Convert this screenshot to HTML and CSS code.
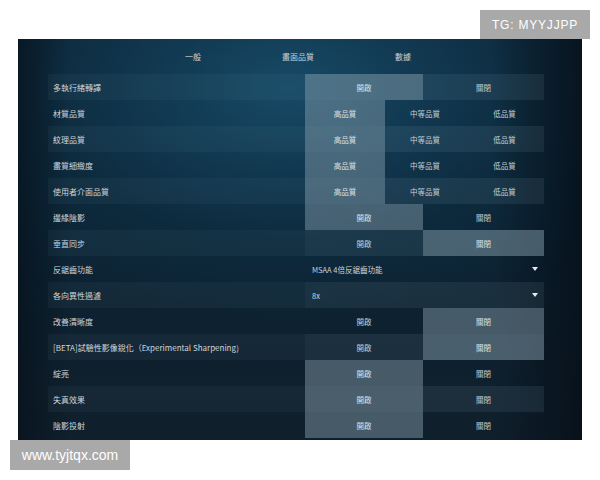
FILE: index.html
```html
<!DOCTYPE html>
<html lang="zh-Hant">
<head>
<meta charset="utf-8">
<title>畫面品質</title>
<link rel="stylesheet" href="styles.css">
</head>
<body>
<div class="wm wm-top">TG: MYYJJPP</div>
<div class="panel">
  <div class="tabs">
    <span class="tab">一般</span>
    <span class="tab">畫面品質</span>
    <span class="tab">數據</span>
  </div>
  <div class="rows">
    <div class="row alt"><div class="label">多執行緒轉譯</div><div class="opts two"><div class="opt on">開啟</div><div class="opt">關閉</div></div></div>
    <div class="row"><div class="label">材質品質</div><div class="opts three"><div class="opt on">高品質</div><div class="opt">中等品質</div><div class="opt">低品質</div></div></div>
    <div class="row alt"><div class="label">紋理品質</div><div class="opts three"><div class="opt on">高品質</div><div class="opt">中等品質</div><div class="opt">低品質</div></div></div>
    <div class="row"><div class="label">畫質細緻度</div><div class="opts three"><div class="opt on">高品質</div><div class="opt">中等品質</div><div class="opt">低品質</div></div></div>
    <div class="row alt"><div class="label">使用者介面品質</div><div class="opts three"><div class="opt on">高品質</div><div class="opt">中等品質</div><div class="opt">低品質</div></div></div>
    <div class="row"><div class="label">邊緣陰影</div><div class="opts two"><div class="opt on">開啟</div><div class="opt">關閉</div></div></div>
    <div class="row alt"><div class="label">垂直同步</div><div class="opts two"><div class="opt">開啟</div><div class="opt on">關閉</div></div></div>
    <div class="row"><div class="label">反鋸齒功能</div><div class="opts dd"><span>MSAA 4倍反鋸齒功能</span><span class="arrow"></span></div></div>
    <div class="row alt"><div class="label">各向異性過濾</div><div class="opts dd"><span>8x</span><span class="arrow"></span></div></div>
    <div class="row"><div class="label">改善清晰度</div><div class="opts two"><div class="opt">開啟</div><div class="opt on">關閉</div></div></div>
    <div class="row alt"><div class="label">[BETA]試驗性影像銳化（Experimental Sharpening)</div><div class="opts two"><div class="opt">開啟</div><div class="opt on">關閉</div></div></div>
    <div class="row"><div class="label">綻亮</div><div class="opts two"><div class="opt on">開啟</div><div class="opt">關閉</div></div></div>
    <div class="row alt"><div class="label">失真效果</div><div class="opts two"><div class="opt on">開啟</div><div class="opt">關閉</div></div></div>
    <div class="row"><div class="label">陰影投射</div><div class="opts two"><div class="opt on">開啟</div><div class="opt">關閉</div></div></div>
  </div>
</div>
<div class="wm wm-bottom">www.tyjtqx.com</div>
</body>
</html>
```

FILE: styles.css
```css
html, body {
  margin: 0;
  padding: 0;
  background: #ffffff;
}
body {
  width: 600px;
  height: 480px;
  position: relative;
  font-family: "Noto Sans CJK TC", "Noto Sans", sans-serif;
  overflow: hidden;
}
.panel {
  margin: 39px 0 0 18px;
  width: 564px;
  height: 401px;
  box-sizing: border-box;
  background:
    linear-gradient(90deg, rgba(4,12,20,0.55) 0%, rgba(4,12,20,0) 9%, rgba(4,12,20,0) 84%, rgba(4,10,18,0.65) 100%),
    linear-gradient(180deg, rgba(0,0,0,0) 55%, rgba(20,28,38,0.5) 100%),
    radial-gradient(ellipse 70% 60% at 48% 12%, #174a66 0%, #113850 35%, #0d2a3d 65%, #0c2232 100%);
  color: #d3dadf;
}
.tabs {
  height: 35px;
  display: flex;
  justify-content: center;
  align-items: center;
  padding-right: 4px;
}
.tab {
  width: 105px;
  text-align: center;
  font-size: 8px;
  color: #c9d1d6;
  line-height: 1;
}
.rows {
  margin-left: 30px;
  width: 496px;
}
.row {
  display: flex;
  height: 26px;
}
.row.alt {
  background: rgba(120, 150, 170, 0.07);
}
.label {
  width: 257px;
  box-sizing: border-box;
  padding-left: 5px;
  display: flex;
  align-items: center;
  font-size: 8px;
  color: #cfd6db;
  white-space: nowrap;
}
.opts {
  width: 239px;
  display: flex;
}
.opt {
  display: flex;
  align-items: center;
  justify-content: center;
  font-size: 7.5px;
  color: #c7cfd4;
}
.two .opt:first-child { width: 118px; }
.two .opt:last-child { width: 121px; }
.three .opt { width: 80px; }
.three .opt:last-child { width: 79px; }
.row.alt .opts .opt { background: rgba(150, 170, 185, 0.06); }
.opts .opt.on,
.row.alt .opts .opt.on {
  background: rgba(140, 162, 175, 0.45);
  color: #dde3e6;
}
.dd {
  justify-content: space-between;
  align-items: center;
  box-sizing: border-box;
  padding: 0 6px 0 7px;
  font-size: 7.5px;
  color: #cdd4d9;
}
.row.alt .dd { background: rgba(150, 170, 185, 0.05); }
.arrow {
  width: 0;
  height: 0;
  border-left: 3px solid transparent;
  border-right: 3px solid transparent;
  border-top: 4px solid #e6eaec;
}
.wm {
  position: absolute;
  background: #a9a9a9;
  color: #ffffff;
  font-family: "Liberation Sans", Arial, sans-serif;
  display: flex;
  align-items: center;
  justify-content: center;
}
.wm-top {
  left: 480px;
  top: 10px;
  width: 110px;
  height: 29px;
  font-size: 12px;
  letter-spacing: 0.8px;
}
.wm-bottom {
  left: 10px;
  top: 440px;
  width: 120px;
  height: 30px;
  font-size: 14px;
}
```
